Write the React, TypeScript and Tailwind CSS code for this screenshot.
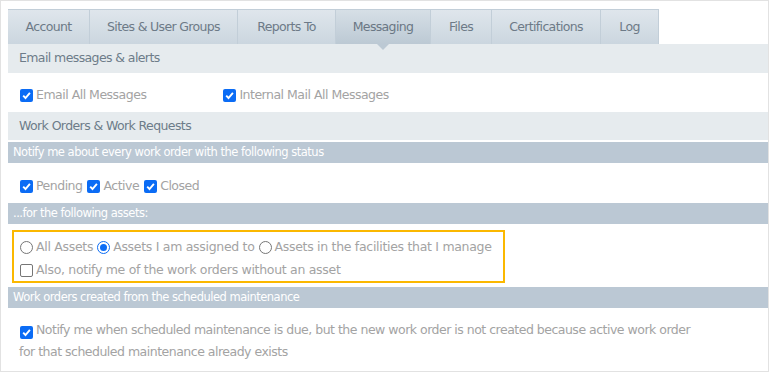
import React from "react";

const font = { fontFamily: "'DejaVu Sans', Verdana, sans-serif" };

function Check({ checked = true }: { checked?: boolean }) {
  if (!checked)
    return (
      <span className="inline-block w-[13px] h-[13px] rounded-[2px] border border-[#767676] bg-white align-middle shrink-0" />
    );
  return (
    <span className="inline-flex items-center justify-center w-[13px] h-[13px] rounded-[2px] bg-[#0b6cf5] align-middle shrink-0">
      <svg width="11" height="11" viewBox="0 0 11 11">
        <path d="M2.2 5.6 L4.5 8 L8.9 2.8" fill="none" stroke="white" strokeWidth="1.9" />
      </svg>
    </span>
  );
}

function Radio({ checked = false }: { checked?: boolean }) {
  if (checked)
    return (
      <span className="inline-flex items-center justify-center w-[13px] h-[13px] rounded-full border-[1.5px] border-[#0b6cf5] bg-white shrink-0">
        <span className="w-[7px] h-[7px] rounded-full bg-[#0b6cf5]" />
      </span>
    );
  return <span className="inline-block w-[13px] h-[13px] rounded-full border border-[#767676] bg-white shrink-0" />;
}

const tabs = [
  { label: "Account", w: 82 },
  { label: "Sites & User Groups", w: 148 },
  { label: "Reports To", w: 98 },
  { label: "Messaging", w: 95, active: true },
  { label: "Files", w: 61 },
  { label: "Certifications", w: 109 },
  { label: "Log", w: 58 },
];

export default function App() {
  return (
    <div
      className="w-[769px] h-[372px] border border-[#e2e2e2] bg-white pl-[7px] pt-[8px] overflow-hidden"
      style={font}
    >
      <div className="flex h-[35px]">
        {tabs.map((t) => (
          <div
            key={t.label}
            style={{ width: t.w }}
            className={
              "relative flex items-center justify-center text-[12.5px] border-r border-t border-[#c2ced8] " +
              (t.active
                ? "bg-gradient-to-b from-[#d6dfe6] to-[#bcc9d4] text-[#6a7784]"
                : "bg-gradient-to-b from-[#dfe6ec] to-[#cbd6df] text-[#6d7a87]")
            }
          >
            <span className="-tracking-[0.65px]">{t.label}</span>
            {t.active && (
              <span className="absolute left-1/2 -translate-x-1/2 top-full w-0 h-0 border-l-[6px] border-r-[6px] border-t-[6px] border-l-transparent border-r-transparent border-t-[#bcc9d4]" />
            )}
          </div>
        ))}
        <div className="flex-1 border-b border-transparent" />
      </div>
      <div>
        <div className="h-[29px] bg-[#e6ebee] flex items-center pl-[11px] text-[12.5px] text-[#6d7c89] -tracking-[0.6px]">
          Email messages &amp; alerts
        </div>
        <div className="h-[39px] flex items-center pt-[6px] pl-[12px] text-[12.5px] text-[#a3a3a3] -tracking-[0.5px]">
          <Check />
          <span className="ml-[3px]">Email All Messages</span>
          <span className="ml-[77px] flex"><Check /></span>
          <span className="ml-[3px]">Internal Mail All Messages</span>
        </div>
        <div className="h-[28px] bg-[#e6ebee] flex items-center pl-[11px] text-[12.5px] text-[#6d7c89] -tracking-[0.6px]">
          Work Orders &amp; Work Requests
        </div>
        <div className="h-[2px]" />
        <div className="h-[21px] bg-[#bbc8d4] flex items-center pl-[5px] text-[11.5px] text-white -tracking-[0.5px]">
          Notify me about every work order with the following status
        </div>
        <div className="h-[40px] flex items-center pt-[7px] pl-[12px] text-[12.5px] text-[#a3a3a3] -tracking-[0.5px]">
          <Check />
          <span className="ml-[3px]">Pending</span>
          <span className="ml-[5px] flex"><Check /></span>
          <span className="ml-[3px]">Active</span>
          <span className="ml-[5px] flex"><Check /></span>
          <span className="ml-[3px]">Closed</span>
        </div>
        <div className="h-[21px] bg-[#bbc8d4] flex items-center pl-[5px] text-[11.5px] text-white -tracking-[0.5px]">
          ...for the following assets:
        </div>
        <div className="h-[63px] pt-[6px] pl-[4px]">
          <div className="w-[493px] h-[53px] border-[2px] border-[#fbb800] pl-[6px] text-[12.5px] text-[#a3a3a3] -tracking-[0.3px]">
            <div className="h-[26px] flex items-center pt-[4px]">
              <Radio />
              <span className="ml-[3px]">All Assets</span>
              <span className="ml-[4px] flex"><Radio checked /></span>
              <span className="ml-[3px]">Assets I am assigned to</span>
              <span className="ml-[4px] flex"><Radio /></span>
              <span className="ml-[3px]">Assets in the facilities that I manage</span>
            </div>
            <div className="h-[22px] flex items-center pt-[2px]">
              <Check checked={false} />
              <span className="ml-[3px]">Also, notify me of the work orders without an asset</span>
            </div>
          </div>
        </div>
        <div className="h-[21px] bg-[#bbc8d4] flex items-center pl-[5px] text-[11.5px] text-white -tracking-[0.5px]">
          Work orders created from the scheduled maintenance
        </div>
        <div className="pt-[12px] pl-[11px] pr-[66px] text-[12.5px] leading-[20px] text-[#a3a3a3] -tracking-[0.5px]">
          <span className="inline-block align-[-2px] ml-[1px]"><Check /></span>
          <span className="ml-[3px]">
            Notify me when scheduled maintenance is due, but the new work order is not created because active work order for that scheduled maintenance already exists
          </span>
        </div>
      </div>
    </div>
  );
}
